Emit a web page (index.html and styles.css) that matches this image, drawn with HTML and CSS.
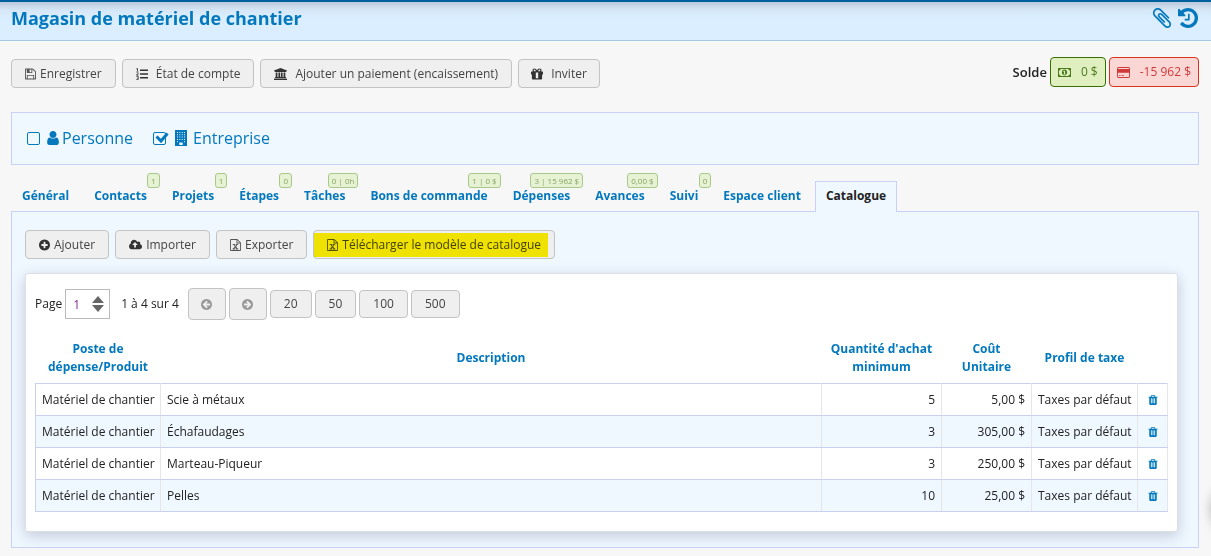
FILE: index.html
```html
<!DOCTYPE html>
<html lang="fr">
<head>
<meta charset="utf-8">
<title>Magasin de matériel de chantier</title>
<link rel="stylesheet" href="styles.css">
</head>
<body>
<svg class="sprite" aria-hidden="true">
  <symbol id="save" viewBox="128 128 1536 1536"><path d="M512 1536h768v-384h-768v384zm896 0h128v-896q0-14-10-38.500t-20-34.500l-281-281q-10-10-34-20t-39-10v416q0 40-28 68t-68 28h-576q-40 0-68-28t-28-68v-416h-128v1280h128v-416q0-40 28-68t68-28h832q40 0 68 28t28 68v416zm-384-928v-320q0-13-9.500-22.500t-22.500-9.500h-192q-13 0-22.500 9.500t-9.500 22.500v320q0 13 9.500 22.500t22.500 9.500h192q13 0 22.500-9.500t9.500-22.500zm640 32v928q0 40-28 68t-68 28h-1344q-40 0-68-28t-28-68v-1344q0-40 28-68t68-28h928q40 0 88 20t76 48l280 280q28 28 48 76t20 88z"/></symbol>
  <symbol id="clip" viewBox="128 128 1536 1536"><path d="M1596 1385q0 117-79 196t-196 79q-135 0-235-100l-777-776q-113-115-113-271 0-159 110-270t269-111q158 0 273 113l605 606q10 10 10 22 0 16-30.500 46.500t-46.500 30.500q-13 0-23-10l-606-607q-79-77-181-77-106 0-179 75t-73 181q0 105 76 181l776 777q63 63 145 63 64 0 106-42t42-106q0-82-63-145l-581-581q-26-24-60-24-29 0-48 19t-19 48q0 32 25 59l410 410q10 10 10 22 0 16-31 47t-47 31q-12 0-22-10l-410-410q-63-61-63-149 0-82 57-139t139-57q88 0 149 63l581 581q100 98 100 235z"/></symbol>
  <symbol id="history" viewBox="128 128 1536 1536"><path d="M1664 896q0 156-61 298t-164 245-245 164-298 61q-172 0-327-72.500t-264-204.500q-7-10-6.500-22.500t8.500-20.500l137-138q10-9 25-9 16 2 23 12 73 95 179 147t225 52q104 0 198.500-40.500t163.500-109.500 109.500-163.500 40.500-198.500-40.500-198.500-109.500-163.500-163.500-109.500-198.500-40.500q-98 0-188 35.500t-160 101.500l137 138q31 30 14 69-17 40-59 40h-448q-26 0-45-19t-19-45v-448q0-42 40-59 39-17 69 14l130 129q107-101 244.500-156.500t284.500-55.500q156 0 298 61t245 164 164 245 61 298zm-640-288v448q0 14-9 23t-23 9h-320q-14 0-23-9t-9-23v-64q0-14 9-23t23-9h224v-352q0-14 9-23t23-9h64q14 0 23 9t9 23z"/></symbol>
  <symbol id="plus" viewBox="128 128 1536 1536"><path d="M1344 960v-128q0-26-19-45t-45-19h-256v-256q0-26-19-45t-45-19h-128q-26 0-45 19t-19 45v256h-256q-26 0-45 19t-19 45v128q0 26 19 45t45 19h256v256q0 26 19 45t45 19h128q26 0 45-19t19-45v-256h256q26 0 45-19t19-45zm320-64q0 209-103 385.500t-279.500 279.500-385.500 103-385.500-103-279.500-279.500-103-385.500 103-385.500 279.500-279.500 385.500-103 385.500 103 279.500 279.500 103 385.500z"/></symbol>
  <symbol id="arrow" viewBox="128 128 1536 1536"><path d="M1408 960v-128q0-26-19-45t-45-19h-502l189-189q19-19 19-45t-19-45l-91-91q-18-18-45-18t-45 18l-362 362-91 91q-18 18-18 45t18 45l91 91 362 362q18 18 45 18t45-18l91-91q18-18 18-45t-18-45l-189-189h502q26 0 45-19t19-45zm256-64q0 209-103 385.500t-279.500 279.500-385.500 103-385.500-103-279.500-279.500-103-385.500 103-385.500 279.500-279.500 385.500-103 385.500 103 279.500 279.500 103 385.500z"/></symbol>
  <symbol id="cloud" viewBox="-64 192 1920 1408"><path d="M1216 864q0-14-9-23l-352-352q-9-9-23-9t-23 9l-351 351q-10 12-10 24 0 14 9 23t23 9h224v352q0 13 9.500 22.500t22.500 9.500h192q13 0 22.500-9.500t9.500-22.500v-352h224q13 0 22.500-9.500t9.500-22.500zm640 288q0 159-112.500 271.500t-271.500 112.500h-1088q-185 0-316.500-131.500t-131.500-316.500q0-130 70-240t188-165q-2-30-2-43 0-212 150-362t362-150q156 0 285.500 87t188.500 231q71-62 166-62 106 0 181 75t75 181q0 76-41 138 130 31 213.500 135.500t83.500 238.500z"/></symbol>
  <symbol id="trash" viewBox="128 128 1536 1536"><path d="M704 1376v-704q0-14-9-23t-23-9h-64q-14 0-23 9t-9 23v704q0 14 9 23t23 9h64q14 0 23-9t9-23zm256 0v-704q0-14-9-23t-23-9h-64q-14 0-23 9t-9 23v704q0 14 9 23t23 9h64q14 0 23-9t9-23zm256 0v-704q0-14-9-23t-23-9h-64q-14 0-23 9t-9 23v704q0 14 9 23t23 9h64q14 0 23-9t9-23zm-544-992h448l-48-117q-7-9-17-11h-317q-10 2-17 11zm928 32v64q0 14-9 23t-23 9h-96v948q0 83-47 143.500t-113 60.500h-832q-66 0-113-58.500t-47-141.500v-952h-96q-14 0-23-9t-9-23v-64q0-14 9-23t23-9h309l70-167q15-37 54-63t79-26h320q40 0 79 26t54 63l70 167h309q14 0 23 9t9 23z"/></symbol>
  <symbol id="user" viewBox="256 128 1280 1536"><path d="M1536 1399q0 109-62.500 187t-150.500 78h-854q-88 0-150.500-78t-62.500-187q0-85 8.500-160.500t31.500-152 58.500-131 94-89 134.500-34.500q131 128 313 128t313-128q76 0 134.500 34.500t94 89 58.500 131 31.500 152 8.500 160.500zm-256-887q0 159-112.500 271.500t-271.500 112.500-271.500-112.500-112.500-271.500 112.500-271.500 271.500-112.500 271.500 112.500 112.500 271.500z"/></symbol>
  <symbol id="building" viewBox="0 0 12 16"><path fill-rule="evenodd" d="M0 0h12v16H0zM2 2v1h1V2zm2.300 0v1h1V2zm2.400 0v1h1V2zM9 2v1h1V2zM2 4.300v1h1v-1zm2.300 0v1h1v-1zm2.400 0v1h1v-1zm2.300 0v1h1v-1zM2 6.600v1h1v-1zm2.300 0v1h1v-1zm2.400 0v1h1v-1zm2.300 0v1h1v-1zM2 9v1h1V9zm2.300 0v1h1V9zm2.400 0v1h1V9zM9 9v1h1V9zM2 11.300v1h1v-1zm7 0v1h1v-1zM4.300 12.500v2.500h3.400v-2.500z"/></symbol>
  <symbol id="list" viewBox="0 0 12 12"><path d="M4 1.500h8v1.600H4zM4 5.200h8v1.600H4zM4 9h8v1.600H4zM1 .3h.9v2.600h.6v.7H.5v-.7H1V1.200H.4V.6zM.4 4.400h2.100v1.300l-1.200 1h1.300v.7H.3v-.9l1.400-1.100v-.4H.4zM.4 8.300h2.200v3.500H.3v-.7h1.500v-.7H.9v-.7h.9v-.7H.4z"/></symbol>
  <symbol id="bank" viewBox="0 0 13 12"><path d="M6.500 0 13 2.400v.9h-.9v.6H.9v-.6H0v-.9zM1.700 4.400h1.700v4.700h1V4.400h1.700v4.700h.8V4.400h1.700v4.700h1V4.400h1.700v4.700h.4l.4.400v.6H.9v-.6l.4-.4h.4zM.4 10.600h12.200l.4.400v1H0v-1z"/></symbol>
  <symbol id="gift" viewBox="0 0 12 12"><path fill-rule="evenodd" d="M5.900 2.300C5.300 1.100 4.500.4 3.500.4 2.300.4 1.500 1.200 1.500 2.200c0 .5.200.9.500 1.200H.4L0 3.800v2.600h.9v4.300c0 .5.300.8.800.8h8.600c.5 0 .8-.3.800-.8V6.400h.9V3.800l-.4-.4H10c.3-.3.500-.7.500-1.200 0-1-.8-1.800-2-1.800-1 0-1.900.7-2.600 1.900zM3.500 1.600c.5 0 .9.500 1.400 1.600H3.500a.8.8 0 0 1 0-1.600zm5 0a.8.8 0 0 1 0 1.600H7c.5-1.100 1-1.600 1.500-1.600zM4.800 4.500h2.400v5.700H4.800z"/></symbol>
  <symbol id="excel" viewBox="0 0 11 12"><path fill-rule="evenodd" d="M.7 0H7.300L11 3.700v7.600l-.7.700H.7L0 11.300V.7zM.9.900v10.200h9.200V4.500H6.500V.9zM7.400 1.200v2.400h2.400zM2.600 5h2.600v.8h-.5l.8 1.200.8-1.200h-.6V5h2.500v.8h-.6L6.100 7.600l1.600 2h.6v.8H5.700v-.8h.6L5.500 8.400l-.9 1.200h.6v.8H2.600v-.8h.6l1.600-2.100-1.300-1.700h-.9z"/></symbol>
  <symbol id="money" viewBox="0 0 13 9"><path fill-rule="evenodd" d="M0 0h13v9H0zM2.600 1A1.700 1.700 0 0 1 1 2.600v3.800A1.700 1.700 0 0 1 2.600 8h7.800A1.700 1.700 0 0 1 12 6.400V2.600A1.700 1.700 0 0 1 10.400 1zM6.500 1.600c1.600 0 2.600 1.300 2.600 2.900S8.100 7.400 6.500 7.400 3.900 6.100 3.900 4.500 4.900 1.600 6.500 1.600zM6 2.700l-.9.800.4.500.5-.3v2.100h-.7v.7h2.500v-.7H7V2.700z"/></symbol>
  <symbol id="card" viewBox="0 0 13 11"><path fill-rule="evenodd" d="M1 0h11l1 1v9l-1 1H1l-1-1V1zM.9.900v1.100h11.200V.9zm0 4.800v4.400h11.200V5.700zM1.900 8.200h1.700v.9H1.900zm2.600 0H7v.9H4.500z"/></symbol>
</svg>

<header class="topbar">
  <h1 class="title">Magasin de matériel de chantier</h1>
  <div class="top-actions">
    <a href="#" aria-label="Pièces jointes"><svg class="ico-top"><use href="#clip"/></svg></a>
    <a href="#" aria-label="Historique"><svg class="ico-top"><use href="#history"/></svg></a>
  </div>
</header>

<main class="page">
  <div class="toolbar">
    <div class="buttons main-buttons">
      <button class="btn btn-wide" type="button"><svg class="ico ico-near ico-soft"><use href="#save"/></svg>Enregistrer</button>
      <button class="btn btn-wide" type="button"><svg class="ico"><use href="#list"/></svg>État de compte</button>
      <button class="btn btn-wide" type="button"><svg class="ico ico-bank"><use href="#bank"/></svg>Ajouter un paiement (encaissement)</button>
      <button class="btn" type="button"><svg class="ico"><use href="#gift"/></svg>Inviter</button>
    </div>
    <div class="balance">
      <span class="balance-label">Solde</span>
      <span class="pill pill-green"><svg class="ico-pill"><use href="#money"/></svg>0 $</span>
      <span class="pill pill-red"><svg class="ico-pill"><use href="#card"/></svg>-15 962 $</span>
    </div>
  </div>

  <section class="kind">
    <label class="choice"><span class="box"><input type="checkbox" class="check"></span><svg class="ico-user"><use href="#user"/></svg>Personne</label>
    <label class="choice"><span class="box"><input type="checkbox" class="check" checked><svg class="tick" viewBox="0 0 14 11"><path d="M1.500 4.500 6 9l6.500-7.500" fill="none" stroke="currentColor" stroke-width="3"/></svg></span><svg class="ico-building"><use href="#building"/></svg>Entreprise</label>
  </section>

  <nav class="tabs">
    <a class="tab" href="#">Général</a>
    <a class="tab" href="#">Contacts<span class="badge">1</span></a>
    <a class="tab" href="#">Projets<span class="badge">1</span></a>
    <a class="tab" href="#">Étapes<span class="badge">0</span></a>
    <a class="tab" href="#">Tâches<span class="badge">0 | 0h</span></a>
    <a class="tab" href="#">Bons de commande<span class="badge">1 | 0 $</span></a>
    <a class="tab" href="#">Dépenses<span class="badge">3 | 15 962 $</span></a>
    <a class="tab" href="#">Avances<span class="badge">0,00 $</span></a>
    <a class="tab" href="#">Suivi<span class="badge">0</span></a>
    <a class="tab" href="#">Espace client</a>
    <a class="tab tab-active" href="#">Catalogue</a>
  </nav>

  <section class="panel">
    <div class="buttons">
      <button class="btn btn-wide" type="button"><svg class="ico ico-near"><use href="#plus"/></svg>Ajouter</button>
      <button class="btn btn-wide" type="button"><svg class="ico ico-cloud"><use href="#cloud"/></svg>Importer</button>
      <button class="btn btn-wide" type="button"><svg class="ico ico-near ico-soft"><use href="#excel"/></svg>Exporter</button>
      <button class="btn btn-wide btn-marked" type="button"><svg class="ico ico-near ico-soft"><use href="#excel"/></svg>Télécharger le modèle de catalogue</button>
    </div>

    <div class="card">
      <div class="pager">
        <label for="page">Page</label>
        <span class="spin">
          <input class="spin-input" id="page" type="text" value="1">
          <svg class="spin-arrows" viewBox="0 0 12 16"><path d="M6 0l6 7H0zM6 16l6-7H0z"/></svg>
        </span>
        <span class="range">1 à 4 sur 4</span>
        <button class="btn btn-arrow" type="button" aria-label="Page précédente"><svg class="ico-arrow"><use href="#arrow"/></svg></button>
        <button class="btn btn-arrow" type="button" aria-label="Page suivante"><svg class="ico-arrow ico-flip"><use href="#arrow"/></svg></button>
        <button class="btn btn-size" type="button">20</button>
        <button class="btn btn-size" type="button">50</button>
        <button class="btn btn-size" type="button">100</button>
        <button class="btn btn-size" type="button">500</button>
      </div>

      <table class="grid">
        <colgroup><col class="c-post"><col><col class="c-qty"><col class="c-cost"><col class="c-tax"><col class="c-del"></colgroup>
        <thead>
          <tr><th>Poste de dépense/Produit</th><th>Description</th><th>Quantité d'achat minimum</th><th>Coût Unitaire</th><th>Profil de taxe</th><th></th></tr>
        </thead>
        <tbody>
          <tr><td>Matériel de chantier</td><td>Scie à métaux</td><td class="num">5</td><td class="num">5,00 $</td><td>Taxes par défaut</td><td class="del"><a href="#" aria-label="Supprimer"><svg class="ico-trash"><use href="#trash"/></svg></a></td></tr>
          <tr><td>Matériel de chantier</td><td>Échafaudages</td><td class="num">3</td><td class="num">305,00 $</td><td>Taxes par défaut</td><td class="del"><a href="#" aria-label="Supprimer"><svg class="ico-trash"><use href="#trash"/></svg></a></td></tr>
          <tr><td>Matériel de chantier</td><td>Marteau-Piqueur</td><td class="num">3</td><td class="num">250,00 $</td><td>Taxes par défaut</td><td class="del"><a href="#" aria-label="Supprimer"><svg class="ico-trash"><use href="#trash"/></svg></a></td></tr>
          <tr><td>Matériel de chantier</td><td>Pelles</td><td class="num">10</td><td class="num">25,00 $</td><td>Taxes par défaut</td><td class="del"><a href="#" aria-label="Supprimer"><svg class="ico-trash"><use href="#trash"/></svg></a></td></tr>
        </tbody>
      </table>
    </div>
  </section>
</main>
<div class="drawer"></div>
</body>
</html>
```
FILE: styles.css
```css
* { box-sizing: border-box; }
body {
  margin: 0;
  background: #f7f7f7;
  color: #222;
  font: 12px/18px "Open Sans", "Noto Sans", sans-serif;
}
a { color: #0378bd; text-decoration: none; }
svg { display: block; fill: currentColor; flex: none; }
.sprite { position: absolute; width: 0; height: 0; }

/* Header */
.topbar {
  display: flex;
  align-items: center;
  justify-content: space-between;
  height: 41px;
  padding: 0 13px 6px 11px;
  border-top: 2px solid #00609c;
  border-bottom: 1px solid #a5cbe0;
  background: linear-gradient(#b9cbda, #d5e7f7 8px, #dbeeff 16px);
}
.title { margin: 0; color: #0378bd; font-size: 18px; line-height: 24px; font-weight: 700; }
.top-actions { display: flex; gap: 6px; }
.ico-top { width: 20px; height: 20px; }

/* Buttons */
.page { padding: 16px 12px 8px 11px; }
.toolbar { display: flex; justify-content: space-between; align-items: flex-start; }
.buttons { display: flex; gap: 6px; }
.main-buttons { padding-top: 2px; }
.btn {
  display: flex;
  align-items: center;
  justify-content: center;
  height: 29px;
  padding: 0 12px;
  border: 1px solid #c3c3c3;
  border-radius: 4px;
  background: #efefef;
  color: #444;
  font: inherit;
}
.btn-wide { padding: 0 13px; }
.ico { width: 12px; height: 12px; margin-right: 8px; color: #333; }
.ico-near { width: 11px; margin-right: 4px; }
.ico-soft { color: #555; }
.ico-bank { width: 13px; }
.ico-cloud { width: 13px; margin-right: 4px; }
.btn-marked { position: relative; }
.btn-marked::after {
  content: "";
  position: absolute;
  inset: 2px 6px 1px 0;
  background: #fff200;
  mix-blend-mode: multiply;
}

/* Balance */
.balance { display: flex; align-items: center; gap: 3px; }
.balance-label { font-size: 13px; font-weight: 600; }
.pill {
  display: flex;
  align-items: center;
  gap: 10px;
  height: 30px;
  padding: 0 7px;
  border: 1px solid;
  border-radius: 4px;
}
.pill-green { background: #e0efc0; border-color: #387000; color: #4a7a1a; }
.pill-red { background: #fad7d5; border-color: #d9331a; color: #cf3a3a; }
.ico-pill { width: 13px; height: 11px; }

/* Client kind */
.kind {
  display: flex;
  gap: 20px;
  margin-top: 24px;
  padding: 13px 15px 14px;
  border: 1px solid #c8d2f8;
  background: #eff7ff;
  color: #0378bd;
  font-size: 16px;
  line-height: 24px;
}
.choice { display: flex; align-items: center; }
.box { position: relative; display: flex; width: 13px; margin-right: 7px; }
.check {
  appearance: none;
  width: 13px;
  height: 13px;
  margin: 0;
  border: 1px solid #0378bd;
  border-radius: 2px;
}
.tick { position: absolute; left: 2px; top: 0; width: 14px; height: 11px; }
.ico-user { width: 12px; height: 14px; margin-right: 3px; }
.ico-building { width: 12px; height: 16px; margin: 0 6px 0 2px; }

/* Tabs */
.tabs { display: flex; gap: 3px; margin-top: 16px; }
.tab {
  position: relative;
  height: 30px;
  padding: 5px 10px;
  border: 1px solid transparent;
  border-bottom: 0;
  font-weight: 700;
  white-space: nowrap;
}
.tab-active {
  z-index: 1;
  height: 31px;
  margin-bottom: -1px;
  border-color: #c8d2f8;
  background: #eff7ff;
  color: #222;
}
.badge {
  position: absolute;
  right: -3px;
  top: -9px;
  height: 15px;
  padding: 0 3px;
  border: 1px solid #a9c98b;
  border-radius: 3px;
  background: #e6f2d3;
  color: #86a562;
  font-size: 8px;
  line-height: 13px;
  font-weight: 400;
}

/* Catalogue panel */
.panel { padding: 18px 20px 15px 13px; border: 1px solid #c8d2f8; background: #eff7ff; }
.card {
  margin-top: 14px;
  padding: 14px 9px 19px;
  border: 1px solid #dcdfe4;
  border-radius: 3px;
  background: #fff;
  box-shadow: 0 4px 14px rgba(40, 50, 90, .22);
}
.pager { display: flex; align-items: center; gap: 3px; }
.spin { position: relative; display: flex; margin-right: 8px; }
.spin-input {
  width: 45px;
  height: 30px;
  padding: 0 7px;
  border: 1px solid #bbb;
  background: #fff;
  color: #7a2c8a;
  font: inherit;
}
.spin-arrows { position: absolute; right: 6px; top: 7px; width: 12px; height: 16px; color: #666; }
.range { margin-right: 6px; }
.btn-arrow { width: 38px; height: 32px; color: #999; }
.ico-arrow { width: 11px; height: 11px; }
.ico-flip { transform: scaleX(-1); }
.btn-size { height: 28px; padding: 0 13px; }

.grid { width: 100%; margin-top: 13px; border-collapse: collapse; table-layout: fixed; }
.c-post { width: 125px; }
.c-qty { width: 120px; }
.c-cost { width: 90px; }
.c-tax { width: 106px; }
.c-del { width: 30px; }
.grid th { height: 50px; padding: 7px 8px; color: #0378bd; font-weight: 700; }
.grid td {
  height: 32px;
  padding: 0 6px;
  border: 1px solid #e4e6ea;
  border-top-color: #c8d2ee;
  border-bottom-color: #c8d2ee;
  white-space: nowrap;
}
.grid td:first-child { border-left-color: #c8d2ee; }
.grid tbody tr:nth-child(even) { background: #eff7ff; }
.grid .num { text-align: right; }
.del a { display: flex; justify-content: center; }
.ico-trash { width: 10px; height: 10px; }

.drawer {
  position: fixed;
  right: -48px;
  bottom: 24px;
  width: 46px;
  height: 46px;
  border-radius: 23px;
  box-shadow: 0 0 14px rgba(0, 0, 0, .35);
}
```
